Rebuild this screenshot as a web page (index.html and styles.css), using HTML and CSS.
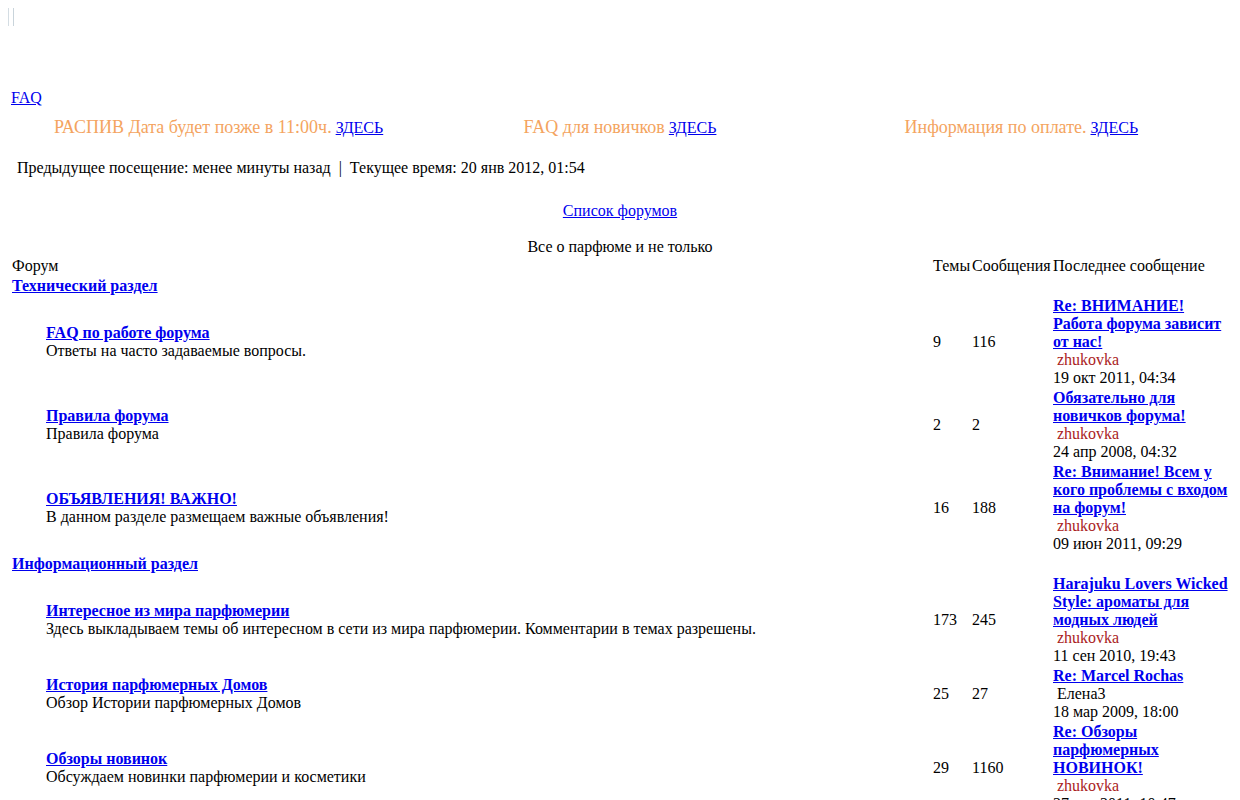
FILE: index.html
```html
<!DOCTYPE html>
<html lang="ru">
<head>
<meta charset="utf-8">
<title>Все о парфюме и не только</title>
<link rel="stylesheet" href="styles.css">
</head>
<body>
<header class="masthead">
  <span class="logo-frame"></span>
</header>

<nav class="topnav"><a href="#">FAQ</a></nav>

<div class="notices">
  <div class="notice"><span class="notice-text">РАСПИВ Дата будет позже в 11:00ч.</span> <a href="#">ЗДЕСЬ</a></div>
  <div class="notice"><span class="notice-text">FAQ для новичков</span> <a href="#">ЗДЕСЬ</a></div>
  <div class="notice"><span class="notice-text">Информация по оплате.</span> <a href="#">ЗДЕСЬ</a></div>
</div>

<p class="visit">Предыдущее посещение: менее минуты назад &nbsp;|&nbsp; Текущее время: 20 янв 2012, 01:54</p>

<p class="crumbs"><a href="#">Список форумов</a></p>

<p class="site-desc">Все о парфюме и не только</p>

<section class="forums">
  <div class="row head">
    <div class="c-name">Форум</div>
    <div class="c-topics">Темы</div>
    <div class="c-posts">Сообщения</div>
    <div class="c-last">Последнее сообщение</div>
  </div>

  <div class="row cat"><a href="#">Технический раздел</a></div>

  <div class="row forum">
    <div class="c-icon"></div>
    <div class="c-forum"><a class="f-title" href="#">FAQ по работе форума</a><br>Ответы на часто задаваемые вопросы.</div>
    <div class="c-topics">9</div>
    <div class="c-posts">116</div>
    <div class="c-last"><a class="f-title" href="#">Re: ВНИМАНИЕ! Работа форума зависит от нас!</a><br>&nbsp;<span class="user">zhukovka</span><br>19 окт 2011, 04:34</div>
  </div>

  <div class="row forum">
    <div class="c-icon"></div>
    <div class="c-forum"><a class="f-title" href="#">Правила форума</a><br>Правила форума</div>
    <div class="c-topics">2</div>
    <div class="c-posts">2</div>
    <div class="c-last"><a class="f-title" href="#">Обязательно для новичков форума!</a><br>&nbsp;<span class="user">zhukovka</span><br>24 апр 2008, 04:32</div>
  </div>

  <div class="row forum">
    <div class="c-icon"></div>
    <div class="c-forum"><a class="f-title" href="#">ОБЪЯВЛЕНИЯ! ВАЖНО!</a><br>В данном разделе размещаем важные объявления!</div>
    <div class="c-topics">16</div>
    <div class="c-posts">188</div>
    <div class="c-last"><a class="f-title" href="#">Re: Внимание! Всем у кого проблемы с входом на форум!</a><br>&nbsp;<span class="user">zhukovka</span><br>09 июн 2011, 09:29</div>
  </div>

  <div class="row cat"><a href="#">Информационный раздел</a></div>

  <div class="row forum">
    <div class="c-icon"></div>
    <div class="c-forum"><a class="f-title" href="#">Интересное из мира парфюмерии</a><br>Здесь выкладываем темы об интересном в сети из мира парфюмерии. Комментарии в темах разрешены.</div>
    <div class="c-topics">173</div>
    <div class="c-posts">245</div>
    <div class="c-last"><a class="f-title" href="#">Harajuku Lovers Wicked Style: ароматы для модных людей</a><br>&nbsp;<span class="user">zhukovka</span><br>11 сен 2010, 19:43</div>
  </div>

  <div class="row forum">
    <div class="c-icon"></div>
    <div class="c-forum"><a class="f-title" href="#">История парфюмерных Домов</a><br>Обзор Истории парфюмерных Домов</div>
    <div class="c-topics">25</div>
    <div class="c-posts">27</div>
    <div class="c-last"><a class="f-title" href="#">Re: Marcel Rochas</a><br>&nbsp;Елена3<br>18 мар 2009, 18:00</div>
  </div>

  <div class="row forum">
    <div class="c-icon"></div>
    <div class="c-forum"><a class="f-title" href="#">Обзоры новинок</a><br>Обсуждаем новинки парфюмерии и косметики</div>
    <div class="c-topics">29</div>
    <div class="c-posts">1160</div>
    <div class="c-last"><a class="f-title" href="#">Re: Обзоры парфюмерных НОВИНОК!</a><br>&nbsp;<span class="user">zhukovka</span><br>27 дек 2011, 10:47</div>
  </div>
</section>
</body>
</html>
```

FILE: styles.css
```css
html {
  background: #fff;
}

body {
  margin: 8px;
  font-family: "Liberation Serif", "Times New Roman", serif;
  font-size: 16px;
  line-height: 18px;
  color: #000;
}

a {
  color: #0000ee;
  text-decoration: underline;
}

p {
  margin: 0;
}

/* top strip with the empty logo frame */
.masthead {
  height: 81px;
}

.logo-frame {
  display: block;
  width: 4px;
  height: 18px;
  border-left: 1px solid #d4dde3;
  border-right: 1px solid #c9d4db;
}

.topnav {
  padding-left: 3px;
  height: 18px;
}

/* three announcement cells */
.notices {
  display: grid;
  grid-template-columns: repeat(3, 1fr);
  margin: 10px 10px 0;
  line-height: 20px;
}

.notice {
  text-align: center;
}

.notice-text {
  color: #f4a460;
  font-size: 18px;
}

.visit {
  margin-top: 21px;
  padding-left: 9px;
}

.crumbs {
  margin-top: 25px;
  text-align: center;
}

.site-desc {
  margin-top: 18px;
  text-align: center;
}

/* forum index */
.forums {
  display: flex;
  flex-direction: column;
  gap: 2px;
  padding: 1px 2px 0 4px;
}

.row {
  display: grid;
  grid-template-columns: 34px 1fr 39px 81px 177px;
  align-items: center;
}

.head .c-name {
  grid-column: 1 / 3;
}

.cat a {
  grid-column: 1 / -1;
  font-weight: bold;
}

.f-title {
  font-weight: bold;
}

.c-icon {
  align-self: stretch;
}

.user {
  color: #aa2222;
}
```
